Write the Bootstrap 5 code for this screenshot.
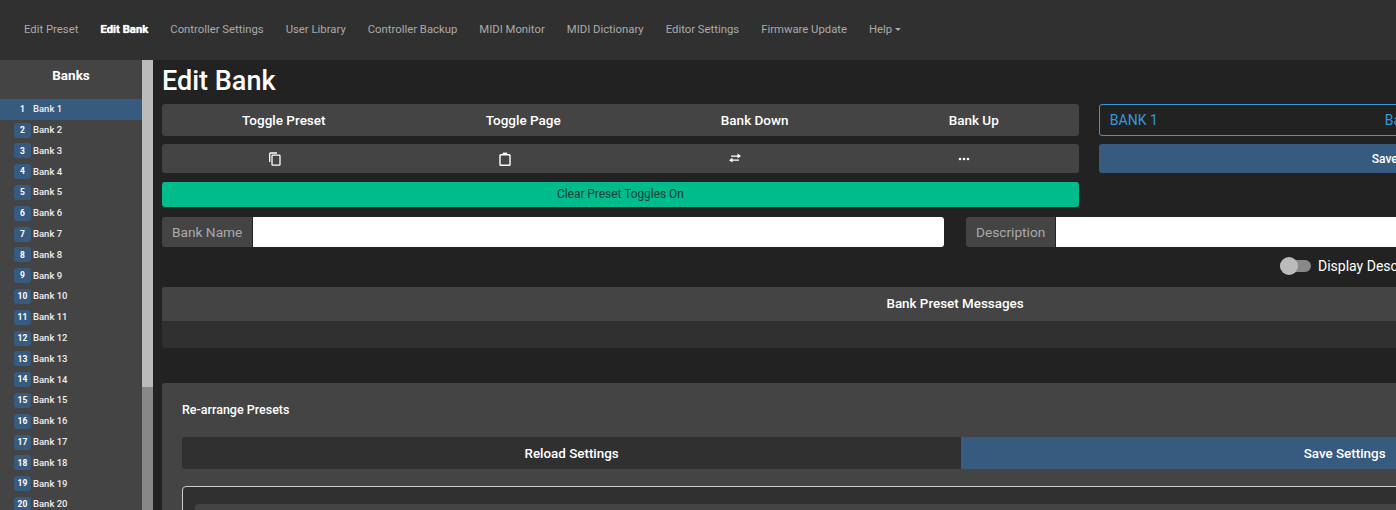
<!DOCTYPE html>
<html lang="en">
<head>
<meta charset="utf-8">
<title>Edit Bank</title>
<link href="https://cdn.jsdelivr.net/npm/bootstrap@5.3.0/dist/css/bootstrap.min.css" rel="stylesheet">
<style>
html,body{height:510px;overflow:hidden;}
body{background:#222;color:#fff;font-family:Roboto,"Liberation Sans",sans-serif;width:1396px;}
.topbar{height:60px;background:#303030;padding:0 13px 2px;flex-wrap:nowrap;}
.topbar.navbar-expand .navbar-nav .nav-link{font-size:11.32px;color:#aaa;padding:0 11px;white-space:nowrap;line-height:18px;}
.topbar.navbar-expand .navbar-nav .nav-link.active{color:#fff;font-weight:700;text-shadow:0 0 1px #fff;}
.topbar .dropdown-toggle::after{margin-left:3px;vertical-align:2px;border-top-width:3.5px;border-left-width:3.5px;border-right-width:3.5px;}
.shell{height:450px;overflow:hidden;}
.sidepane{width:142px;flex:none;background:#444;}
.sidetitle{font-size:13.5px;font-weight:700;text-align:center;height:39px;line-height:30px;margin:0;}
.list-group .bankrow{display:flex;align-items:center;height:20.8px;padding:0 0 0 14px;background:transparent;border:0;border-radius:0;color:#eee;font-size:9.5px;font-weight:500;}
.list-group .bankrow.is-on{background:#375a7f;}
.banknum{width:17px;height:15px;background:#375a7f;border-radius:3px;font-size:8.5px;font-weight:700;color:#fff;display:flex;align-items:center;justify-content:center;margin-right:2px;flex:none;}
.scrolltrack{width:11px;flex:none;background:#888;}
.scrollthumb{height:327px;background:#bbb;}
.mainpane{flex:none;width:1586px;margin-left:9px;}
.pagehead{font-size:27px;font-weight:500;line-height:32px;margin:5px 0 7px;}
.toprow{--bs-gutter-x:20px;}
.toolflex{display:flex;background:#444;border-radius:3px;}
.toolflex>.btn{flex:1 1 auto;background:transparent;border:0;color:#fff;padding:0;font-size:13.5px;font-weight:500;border-radius:0;}
.toolone{height:32px;margin-bottom:8px;}
.toolgrid{display:grid;grid-template-columns:repeat(4,1fr);background:#444;border-radius:3px;height:29px;margin-bottom:9px;}
.toolgrid>.btn{background:transparent;border:0;padding:0;display:flex;align-items:center;justify-content:center;border-radius:0;}
.toolgrid svg{display:block;}
.iconcopy{margin-right:3px;}
.iconpaste{margin-right:2px;}
.clearbtn{display:block;width:100%;height:25px;padding:0;background:#00bc8c;border:0;border-radius:3px;color:#1c3a33;font-size:11.9px;}
.bankbox{height:32px;border:1px solid #3498db;border-radius:3px;color:#3498db;font-size:14px;display:flex;align-items:center;padding:1px 10px 0;margin-bottom:8px;white-space:nowrap;}
.bankbox span:first-child{width:275px;flex:none;}
.savewide{display:block;width:100%;height:29px;padding:0;background:#375a7f;border:0;border-radius:3px;color:#fff;font-size:12px;font-weight:500;}
.fieldrow{margin-top:10px;--bs-gutter-x:22px;}
.fieldrow .input-group{height:30px;flex-wrap:nowrap;}
.fieldlabel{background:#444;border:0;color:#aaa;font-size:13.7px;padding:0 10px;border-radius:3px 0 0 3px;height:30px;}
.fieldrow .form-control{height:30px;min-height:0;border:0;border-radius:0 3px 3px 0;background:#fff;margin-left:1px!important;}
.descswitch{display:flex;align-items:center;padding:0 0 2px 314px;height:40px;font-size:14px;white-space:nowrap;}
.switchtrack{width:31px;height:12px;background:#888;border-radius:6px;position:relative;margin-right:7px;flex:none;}
.switchknob{position:absolute;left:0;top:-3px;width:18px;height:18px;background:#bbb;border-radius:50%;}
.msgcard{background:#303030;border:0;border-radius:3px;height:61px;margin-bottom:35px;overflow:hidden;}
.msgcard .msghead{background:#444;height:34px;line-height:33px;text-align:center;font-size:13.4px;font-weight:500;padding:0;border:0;border-radius:0;}
.arrangecard{background:#444;border:0;border-radius:3px;padding:0 20px;height:200px;}
.arrangehead{font-size:12.5px;font-weight:500;line-height:16px;padding-top:19px;margin:0 0 19px;}
.actionrow{display:flex;height:33px;}
.actionrow .btn{flex:1 1 auto;border:0;border-radius:0;color:#fff;font-size:13.4px;font-weight:500;padding:2px 0 0;}
.reloadbtn{background:#303030;}
.actionrow .reloadbtn{border-top-left-radius:3px;border-bottom-left-radius:3px;}
.savebtn{background:#375a7f;}
.innerbox{margin-top:17px;height:100px;border:1px solid #ccc;border-radius:4px;background:#303030;padding:17px 12px;}
.innerbar{height:40px;background:#444;border-radius:3px;}
</style>
</head>
<body>
<nav class="navbar topbar navbar-expand d-flex align-items-center">
  <ul class="navbar-nav">
    <li class="nav-item"><a class="nav-link" href="#">Edit Preset</a></li>
    <li class="nav-item"><a class="nav-link active" href="#">Edit Bank</a></li>
    <li class="nav-item"><a class="nav-link" href="#">Controller Settings</a></li>
    <li class="nav-item"><a class="nav-link" href="#">User Library</a></li>
    <li class="nav-item"><a class="nav-link" href="#">Controller Backup</a></li>
    <li class="nav-item"><a class="nav-link" href="#">MIDI Monitor</a></li>
    <li class="nav-item"><a class="nav-link" href="#">MIDI Dictionary</a></li>
    <li class="nav-item"><a class="nav-link" href="#">Editor Settings</a></li>
    <li class="nav-item"><a class="nav-link" href="#">Firmware Update</a></li>
    <li class="nav-item dropdown"><a class="nav-link dropdown-toggle" href="#">Help</a></li>
  </ul>
</nav>
<div class="shell d-flex">
  <aside class="sidepane">
    <h2 class="sidetitle">Banks</h2>
    <div class="list-group" id="banks"></div>
  </aside>
  <div class="scrolltrack"><div class="scrollthumb"></div></div>
  <main class="mainpane">
    <h1 class="pagehead">Edit Bank</h1>
    <div class="row toprow">
      <div class="col-7">
        <div class="toolflex toolone">
          <button class="btn">Toggle Preset</button><button class="btn">Toggle Page</button><button class="btn">Bank Down</button><button class="btn">Bank Up</button>
        </div>
        <div class="toolgrid">
          <button class="btn" aria-label="Copy"><svg class="iconcopy" width="14" height="14" viewBox="0 0 14 14" fill="none" stroke="#fff" stroke-width="1.3"><rect x="4" y="3.2" width="8" height="10" rx=".8"/><path d="M1.7 10V1.8q0-.8.8-.8H9"/></svg></button>
          <button class="btn" aria-label="Paste"><svg class="iconpaste" width="14" height="14" viewBox="0 0 14 14" fill="none" stroke="#fff" stroke-width="1.4"><rect x="2" y="2.7" width="10" height="10.6" rx=".8"/><path d="M4.8 1.6h4.4" stroke-width="2"/></svg></button>
          <button class="btn" aria-label="Swap"><svg width="14" height="14" viewBox="0 0 14 14" fill="#fff"><path d="M3 3.4h6.5V1.6L13 4 9.5 6.4V4.7H3zM11 7.5H4.5V5.8L1 8.2l3.5 2.4V8.8H11z"/></svg></button>
          <button class="btn" aria-label="More"><svg width="14" height="14" viewBox="0 0 14 14" fill="#fff"><circle cx="3" cy="7" r="1.3"/><circle cx="7" cy="7" r="1.3"/><circle cx="11" cy="7" r="1.3"/></svg></button>
        </div>
        <button class="clearbtn btn">Clear Preset Toggles On</button>
      </div>
      <div class="col-5">
        <div class="bankbox"><span>BANK 1</span><span>Bank 1</span></div>
        <button class="savewide btn">Save Bank Settings</button>
      </div>
    </div>
    <div class="row fieldrow">
      <div class="col-6"><div class="input-group"><span class="input-group-text fieldlabel">Bank Name</span><input class="form-control" type="text" aria-label="Bank Name"></div></div>
      <div class="col-6"><div class="input-group"><span class="input-group-text fieldlabel">Description</span><input class="form-control" type="text" aria-label="Description"></div></div>
    </div>
    <div class="row fieldrow mt-0">
      <div class="col-6"></div>
      <div class="col-6"><div class="descswitch"><span class="switchtrack"><span class="switchknob"></span></span>Display Description</div></div>
    </div>
    <div class="card msgcard"><div class="card-header msghead">Bank Preset Messages</div></div>
    <div class="card arrangecard">
      <h3 class="arrangehead">Re-arrange Presets</h3>
      <div class="actionrow"><button class="btn reloadbtn">Reload Settings</button><button class="btn savebtn">Save Settings</button></div>
      <div class="innerbox"><div class="innerbar"></div></div>
    </div>
  </main>
</div>
<script>
var h='';for(var i=1;i<=21;i++){h+='<div class="list-group-item bankrow'+(i==1?' is-on':'')+'"><span class="banknum">'+i+'</span>Bank '+i+'</div>';}
document.getElementById('banks').innerHTML=h;
</script>
</body>
</html>
